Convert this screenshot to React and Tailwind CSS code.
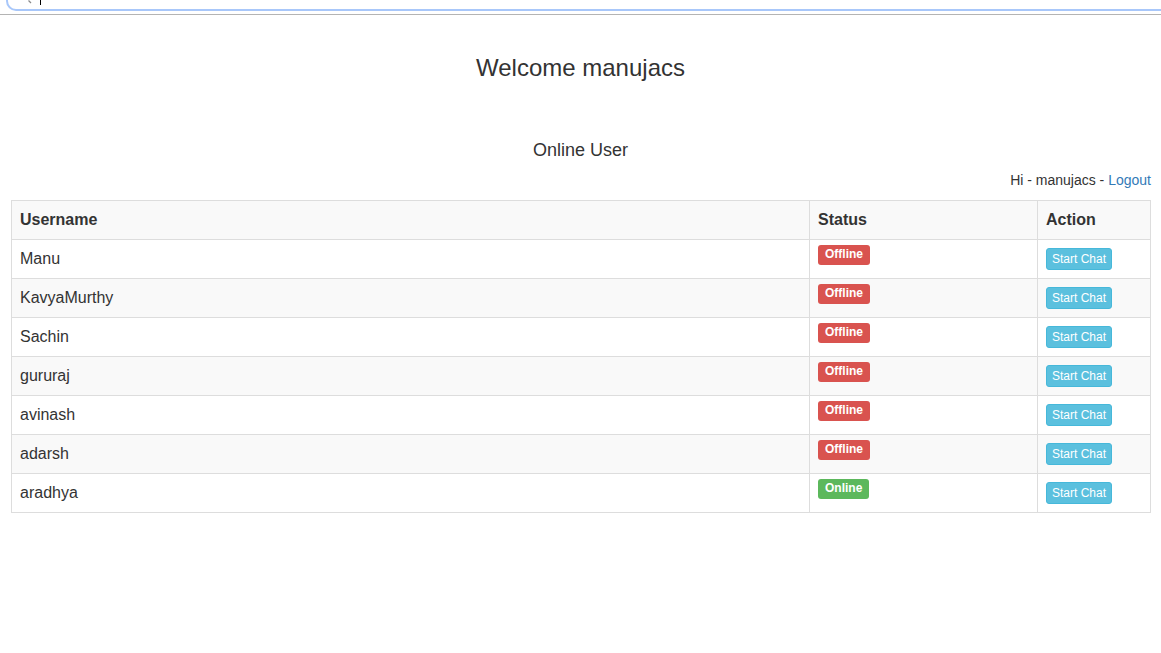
import React from 'react';

const users = [
  { name: 'Manu', online: false },
  { name: 'KavyaMurthy', online: false },
  { name: 'Sachin', online: false },
  { name: 'gururaj', online: false },
  { name: 'avinash', online: false },
  { name: 'adarsh', online: false },
  { name: 'aradhya', online: true },
];

const StatusLabel = ({ online }) => (
  <span
    className={`inline-block align-top -mt-[3px] px-[7px] pb-[2px] text-[12px] leading-[18px] font-bold text-white rounded-[3px] ${
      online ? 'bg-[#5cb85c]' : 'bg-[#d9534f]'
    }`}
  >
    {online ? 'Online' : 'Offline'}
  </span>
);

const App = () => {
  return (
    <div
      className="min-h-[653px] bg-white text-[#333]"
      style={{ fontFamily: '"Liberation Sans", Arial, sans-serif' }}
    >
      {/* Browser address bar remnant */}
      <div className="h-[15px] border-b border-[#b4b4b4] overflow-hidden">
        <div className="h-[11px] ml-[6px] border-l-2 border-b-2 border-[#a8c7fa] rounded-bl-[10px] flex items-start pl-[20px]">
          <svg width="4" height="4" viewBox="0 0 4 4">
            <path d="M0.5 0.5 L3 3" stroke="#8a8a8a" strokeWidth="1.2" />
          </svg>
          <div className="ml-[8px] w-px h-[5px] bg-black" />
        </div>
      </div>

      <h3 className="mt-[40px] text-center text-[24px] leading-[26px]">Welcome manujacs</h3>

      <h4 className="mt-[59px] text-center text-[18px] leading-[20px]">Online User</h4>

      <div className="mt-[10px] mr-[10px] text-right text-[14px] leading-[20px]">
        Hi - manujacs - <a className="text-[#337ab7]">Logout</a>
      </div>

      <table className="mt-[10px] ml-[11px] w-[1140px] border-collapse border border-[#ddd] text-[16px] leading-[22px]">
        <tbody>
          <tr className="bg-[#f9f9f9]">
            <th className="w-[798px] border border-[#ddd] px-2 py-2 text-left font-bold">Username</th>
            <th className="w-[228px] border border-[#ddd] px-2 py-2 text-left font-bold">Status</th>
            <th className="border border-[#ddd] px-2 py-2 text-left font-bold">Action</th>
          </tr>
          {users.map((u, i) => (
            <tr key={u.name} className={i % 2 === 1 ? 'bg-[#f9f9f9]' : 'bg-white'}>
              <td className="border border-[#ddd] px-2 py-2 align-top">{u.name}</td>
              <td className="border border-[#ddd] px-2 py-2 align-top">
                <StatusLabel online={u.online} />
              </td>
              <td className="border border-[#ddd] px-2 py-2 align-top">
                <button className="align-top px-[5px] py-px text-[12px] leading-[18px] text-white bg-[#5bc0de] border border-[#46b8da] rounded-[3px]">
                  Start Chat
                </button>
              </td>
            </tr>
          ))}
        </tbody>
      </table>
    </div>
  );
};

export default App;
